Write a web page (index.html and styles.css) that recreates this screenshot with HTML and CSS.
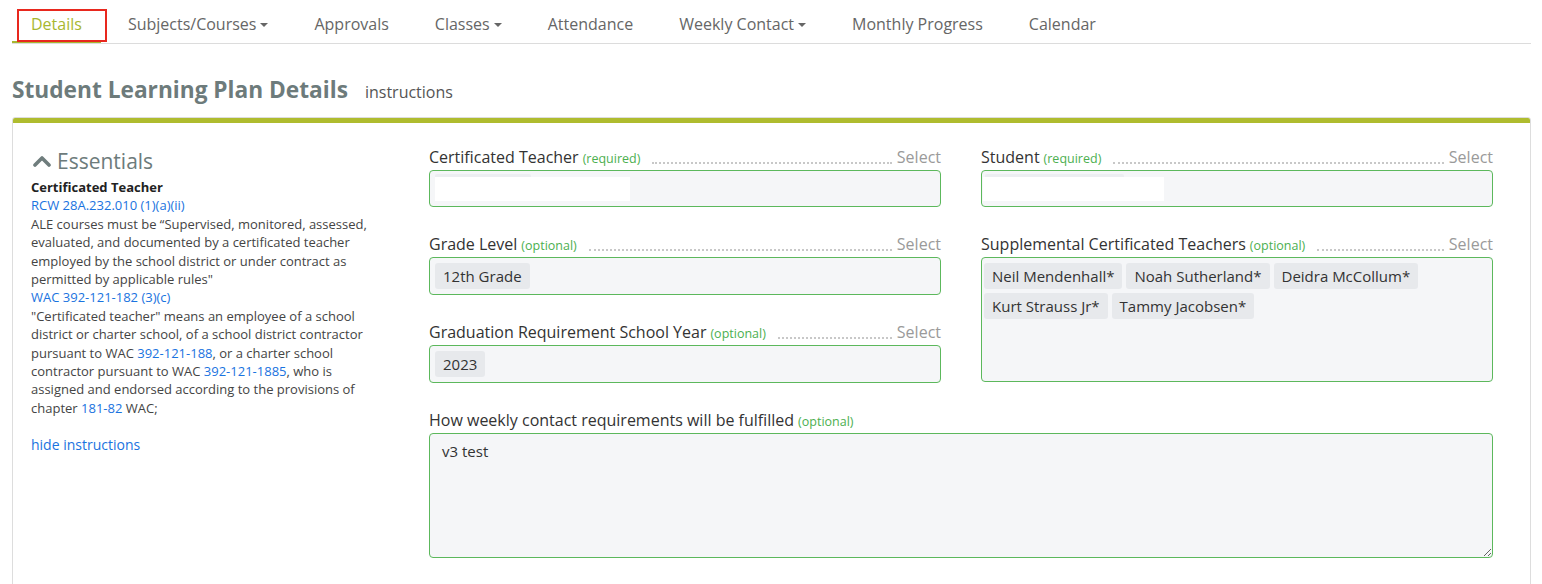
FILE: index.html
```html
<!DOCTYPE html>
<html>
<head>
<meta charset="utf-8">
<link rel="stylesheet" href="styles.css">
</head>
<body>
<nav class="tabs">
  <a class="tab active">Details</a>
  <a class="tab">Subjects/Courses<span class="caret"></span></a>
  <a class="tab">Approvals</a>
  <a class="tab">Classes<span class="caret"></span></a>
  <a class="tab">Attendance</a>
  <a class="tab">Weekly Contact<span class="caret"></span></a>
  <a class="tab">Monthly Progress</a>
  <a class="tab">Calendar</a>
</nav>

<div class="page-head">
  <h1 class="title">Student Learning Plan Details</h1>
  <span class="subtitle">instructions</span>
</div>

<section class="card">
  <div class="card-bar"></div>
  <div class="card-body">
    <aside class="instructions">
      <h2 class="ess-head">
        <svg class="chev" width="18" height="12" viewBox="0 0 18 12"><polyline points="2,10 9,3 16,10" fill="none" stroke="#6f7d7d" stroke-width="3.6" stroke-linecap="round" stroke-linejoin="round"/></svg>
        Essentials
      </h2>
      <div class="ins-text">
        <div class="ins-title">Certificated Teacher</div>
        <div><a class="lnk">RCW 28A.232.010 (1)(a)(ii)</a></div>
        <div>ALE courses must be “Supervised, monitored, assessed, evaluated, and documented by a certificated teacher employed by the school district or under contract as permitted by applicable rules"</div>
        <div><a class="lnk">WAC 392-121-182 (3)(c)</a></div>
        <div>"Certificated teacher" means an employee of a school district or charter school, of a school district contractor pursuant to WAC <a class="lnk">392-121-188</a>, or a charter school contractor pursuant to WAC <a class="lnk">392-121-1885</a>, who is assigned and endorsed according to the provisions of chapter <a class="lnk">181-82</a> WAC;</div>
      </div>
      <a class="hide-link">hide instructions</a>
    </aside>

    <div class="form">
      <div class="field">
        <div class="label-row">
          <span class="label">Certificated Teacher</span><span class="req">(required)</span>
          <span class="leader"></span><span class="select">Select</span>
        </div>
        <div class="box">
          <div class="redact"><div class="band band-a"></div><div class="blank blank-a"></div></div>
        </div>
      </div>

      <div class="field">
        <div class="label-row">
          <span class="label">Student</span><span class="req">(required)</span>
          <span class="leader"></span><span class="select">Select</span>
        </div>
        <div class="box">
          <div class="redact redact-b"><div class="band band-b"></div><div class="blank blank-b"></div></div>
        </div>
      </div>

      <div class="stack">
        <div class="field">
          <div class="label-row">
            <span class="label">Grade Level</span><span class="req">(optional)</span>
            <span class="leader"></span><span class="select">Select</span>
          </div>
          <div class="box"><span class="chip">12th Grade</span></div>
        </div>
        <div class="field">
          <div class="label-row">
            <span class="label">Graduation Requirement School Year</span><span class="req">(optional)</span>
            <span class="leader"></span><span class="select">Select</span>
          </div>
          <div class="box"><span class="chip">2023</span></div>
        </div>
      </div>

      <div class="field">
        <div class="label-row">
          <span class="label">Supplemental Certificated Teachers</span><span class="req">(optional)</span>
          <span class="leader"></span><span class="select">Select</span>
        </div>
        <div class="box box-tall">
          <span class="chip">Neil Mendenhall*</span>
          <span class="chip">Noah Sutherland*</span>
          <span class="chip">Deidra McCollum*</span>
          <span class="chip">Kurt Strauss Jr*</span>
          <span class="chip">Tammy Jacobsen*</span>
        </div>
      </div>

      <div class="field wide">
        <div class="label-row">
          <span class="label">How weekly contact requirements will be fulfilled</span><span class="req">(optional)</span>
        </div>
        <textarea class="ta">v3 test</textarea>
      </div>
    </div>
  </div>
</section>
</body>
</html>
```

FILE: styles.css
```css
html, body {
  background: #fff;
}
body {
  margin: 0 11px 0 12px;
  font-family: "Open Sans", "Liberation Sans", sans-serif;
  color: #333;
  overflow: hidden;
}

/* nav tabs */
.tabs {
  display: flex;
  gap: 8px;
  border-bottom: 1px solid #dcdcdc;
  margin-right: -11px;
}
.tab {
  position: relative;
  display: block;
  padding: 13px 19px 8px;
  font-size: 16px;
  line-height: 22px;
  color: #666;
  white-space: nowrap;
}
.tab.active {
  color: #a8b72f;
  box-shadow: inset 0 -2px 0 #a8b72f;
}
.tab.active::after {
  content: "";
  position: absolute;
  left: 5px;
  top: 9px;
  width: 90px;
  height: 33px;
  box-sizing: border-box;
  border: 2px solid #e8281e;
}
.caret {
  display: inline-block;
  margin-left: 4px;
  vertical-align: middle;
  border-top: 4px solid #666;
  border-left: 4px solid transparent;
  border-right: 4px solid transparent;
  position: relative;
  top: -1px;
}

/* page header */
.page-head {
  display: flex;
  align-items: baseline;
  margin-top: 30px;
  height: 43px;
}
.title {
  margin: 0;
  font-size: 22.7px;
  line-height: 32px;
  font-weight: 700;
  color: #6d7b7b;
}
.subtitle {
  margin-left: 17px;
  font-size: 16px;
  color: #555;
}

/* card */
.card {
  border: 1px solid #dddddd;
  border-radius: 3px;
  height: 500px;
}
.card-bar {
  height: 5px;
  background: #afbc2f;
  border-radius: 2px 2px 0 0;
}
.card-body {
  display: flex;
  padding: 23px 37px 0 18px;
}

/* left instructions */
.instructions {
  width: 398px;
  flex: none;
}
.ess-head {
  margin: 0;
  display: flex;
  align-items: center;
  height: 30px;
  font-size: 21px;
  font-weight: 400;
  color: #6d7b7b;
}
.chev {
  margin: 0 6px 0 2px;
}
.ins-text {
  width: 345px;
  font-size: 13px;
  line-height: 18.4px;
  color: #444;
  margin-top: 2px;
}
.ins-title {
  font-weight: 700;
  color: #222;
}
.lnk {
  color: #1a73e0;
}
.hide-link {
  display: block;
  margin-top: 18px;
  font-size: 14px;
  line-height: 20px;
  color: #1a73e0;
}

/* form */
.form {
  flex: 1;
  display: grid;
  grid-template-columns: 1fr 1fr;
  column-gap: 40px;
  align-items: start;
}
.wide {
  grid-column: 1 / 3;
}
.field {
  margin-bottom: 26px;
}
.label-row {
  display: flex;
  align-items: baseline;
  height: 22px;
  line-height: 22px;
  margin-bottom: 2px;
  white-space: nowrap;
}
.label {
  font-size: 16px;
  color: #333;
}
.req {
  font-size: 12.5px;
  color: #4caf50;
  margin-left: 4px;
}
.leader {
  flex: 1;
  align-self: flex-end;
  margin: 0 5px 4px 12px;
  border-bottom: 2px dotted #c8c8c8;
}
.select {
  font-size: 16px;
  color: #9a9a9a;
}
.box {
  box-sizing: border-box;
  min-height: 37px;
  border: 1px solid #5cb85c;
  border-radius: 4px;
  background: #f5f6f8;
  padding: 5px;
  display: flex;
  flex-wrap: wrap;
  align-content: flex-start;
  gap: 4px;
}
.box-tall {
  height: 125px;
  padding: 5px 2px;
}
.chip {
  display: block;
  height: 26px;
  line-height: 26px;
  padding: 0 8px;
  border-radius: 3px;
  background: #e7e9ec;
  font-size: 15px;
  color: #333;
}

/* redacted values */
.redact {
  display: flex;
  flex-direction: column;
  margin-top: -2px;
}
.redact-b {
  margin-left: -4px;
}
.band {
  height: 3px;
  background: #eceef1;
  border-radius: 2px 2px 0 0;
}
.band-a { width: 96px; }
.band-b { width: 139px; margin-left: 2px; }
.blank {
  height: 24px;
  background: #fff;
}
.blank-a { width: 195px; }
.blank-b { width: 181px; }

.ta {
  display: block;
  box-sizing: border-box;
  width: 100%;
  height: 125px;
  border: 1px solid #5cb85c;
  border-radius: 4px;
  background: #f5f6f8;
  padding: 6px 12px;
  font-family: "Open Sans", "Liberation Sans", sans-serif;
  font-size: 15px;
  line-height: 22px;
  color: #333;
  resize: vertical;
  outline: none;
}
```
